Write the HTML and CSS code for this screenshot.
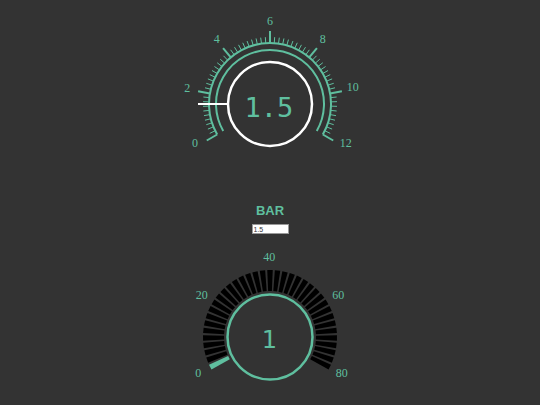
FILE: index.html
```html
<!DOCTYPE html>
<html lang="en">
<head>
<meta charset="utf-8">
<title>Pressure</title>
<link rel="stylesheet" href="styles.css">
</head>
<body>
<main class="panel">
  <svg class="dial" width="200" height="160" viewBox="0 0 200 160">
    <g id="bar-ticks"></g>
    <path class="arc" d="M47.17 134.5 A61 61 0 1 1 152.83 134.5"/>
    <path class="arc" d="M53.23 131 A54 54 0 1 1 146.77 131"/>
    <circle class="hub" cx="100" cy="104" r="42"/>
    <line class="needle" x1="58" y1="104" x2="28" y2="104"/>
    <text class="readout" x="99" y="117">1.5</text>
    <g class="scale">
      <text x="25" y="147.3">0</text>
      <text x="17.3" y="92.3">2</text>
      <text x="46.7" y="43.3">4</text>
      <text x="100" y="24.7">6</text>
      <text x="152.7" y="43.3">8</text>
      <text x="182.7" y="91.3">10</text>
      <text x="175.7" y="147.3">12</text>
    </g>
  </svg>

  <h2 class="title">BAR</h2>
  <input class="value-input" type="text" value="1.5">

  <svg class="dial dial-level" width="200" height="160" viewBox="0 0 200 160">
    <g id="level-segments"></g>
    <circle class="ring" cx="100" cy="92" r="42.5"/>
    <text class="readout readout-level" x="99" y="103">1</text>
    <g class="scale">
      <text x="28.3" y="132.3">0</text>
      <text x="31.7" y="54">20</text>
      <text x="99.3" y="15.7">40</text>
      <text x="168.3" y="54">60</text>
      <text x="171.7" y="132.3">80</text>
    </g>
  </svg>
</main>
<script src="script.js"></script>
</body>
</html>
```

FILE: styles.css
```css
html, body {
  margin: 0;
  padding: 0;
  background: #333333;
}

body {
  width: 540px;
  height: 405px;
  overflow: hidden;
  font-family: "Liberation Sans", Arial, sans-serif;
}

.panel {
  display: flex;
  flex-direction: column;
  align-items: center;
}

.dial {
  display: block;
  flex: none;
}

.dial-level {
  margin-top: 11px;
}

/* dial strokes */
.arc {
  fill: none;
  stroke: #5fbf9f;
  stroke-width: 2;
}

.tick {
  stroke: #5fbf9f;
  stroke-width: 1;
}

.tick-major {
  stroke-width: 2;
}

.hub {
  fill: none;
  stroke: #ffffff;
  stroke-width: 2.5;
}

.needle {
  stroke: #ffffff;
  stroke-width: 2;
}

.ring {
  fill: none;
  stroke: #5fbf9f;
  stroke-width: 2.5;
}

.seg {
  fill: #000000;
}

.seg-on {
  fill: #5fbf9f;
}

/* dial text */
.readout {
  font-family: "DejaVu Sans Mono", "Liberation Mono", monospace;
  font-size: 27px;
  fill: #5fbf9f;
  text-anchor: middle;
}

.readout-level {
  font-size: 25px;
}

.scale text {
  font-family: "Liberation Serif", "Times New Roman", serif;
  font-size: 12px;
  fill: #5fbf9f;
  text-anchor: middle;
}

/* caption and entry field */
.title {
  margin: 43px 0 0;
  font-size: 13px;
  line-height: 15px;
  font-weight: bold;
  color: #5fbf9f;
}

.value-input {
  box-sizing: border-box;
  width: 37px;
  height: 10px;
  margin: 6px 0 0;
  padding: 0 1px;
  border: 1px solid #999999;
  background: #ffffff;
  color: #333333;
  font-family: "Liberation Sans", Arial, sans-serif;
  font-size: 7px;
  line-height: 8px;
  outline: none;
}
```

FILE: script.js
```js
const SVG_NS = 'http://www.w3.org/2000/svg';

// Point on a circle; angles in degrees, counter-clockwise from 3 o'clock.
function point(cx, cy, r, deg) {
  const a = deg * Math.PI / 180;
  return [cx + r * Math.cos(a), cy - r * Math.sin(a)];
}

function add(parent, tag, attrs) {
  const node = document.createElementNS(SVG_NS, tag);
  for (const key in attrs) node.setAttribute(key, attrs[key]);
  parent.appendChild(node);
  return node;
}

// Pressure scale: 0..12 over 240 degrees, a tick every 0.2 and a long one every 2.
const ticks = document.getElementById('bar-ticks');
for (let i = 0; i <= 60; i++) {
  const deg = 210 - i * 4;
  const major = i % 10 === 0;
  const [x1, y1] = point(100, 104, 61, deg);
  const [x2, y2] = point(100, 104, major ? 73 : 67, deg);
  add(ticks, 'line', {
    x1: x1.toFixed(2), y1: y1.toFixed(2),
    x2: x2.toFixed(2), y2: y2.toFixed(2),
    class: major ? 'tick tick-major' : 'tick'
  });
}

// Level ring: wedges spread over 240 degrees with a small gap between them,
// lit up to the current value.
const ring = document.getElementById('level-segments');
const level = { value: 1, max: 80, count: 37 };
const rIn = 46, rOut = 67, half = 0.9;
const step = 240 / level.count;
const lit = Math.ceil(level.value / level.max * level.count);
for (let i = 0; i < level.count; i++) {
  const a0 = 210 - i * step - half;
  const a1 = 210 - (i + 1) * step + half;
  const pts = [
    point(100, 92, rIn, a0),
    point(100, 92, rOut, a0),
    point(100, 92, rOut, a1),
    point(100, 92, rIn, a1)
  ];
  add(ring, 'polygon', {
    points: pts.map(p => p[0].toFixed(2) + ',' + p[1].toFixed(2)).join(' '),
    class: i < lit ? 'seg seg-on' : 'seg'
  });
}
```
